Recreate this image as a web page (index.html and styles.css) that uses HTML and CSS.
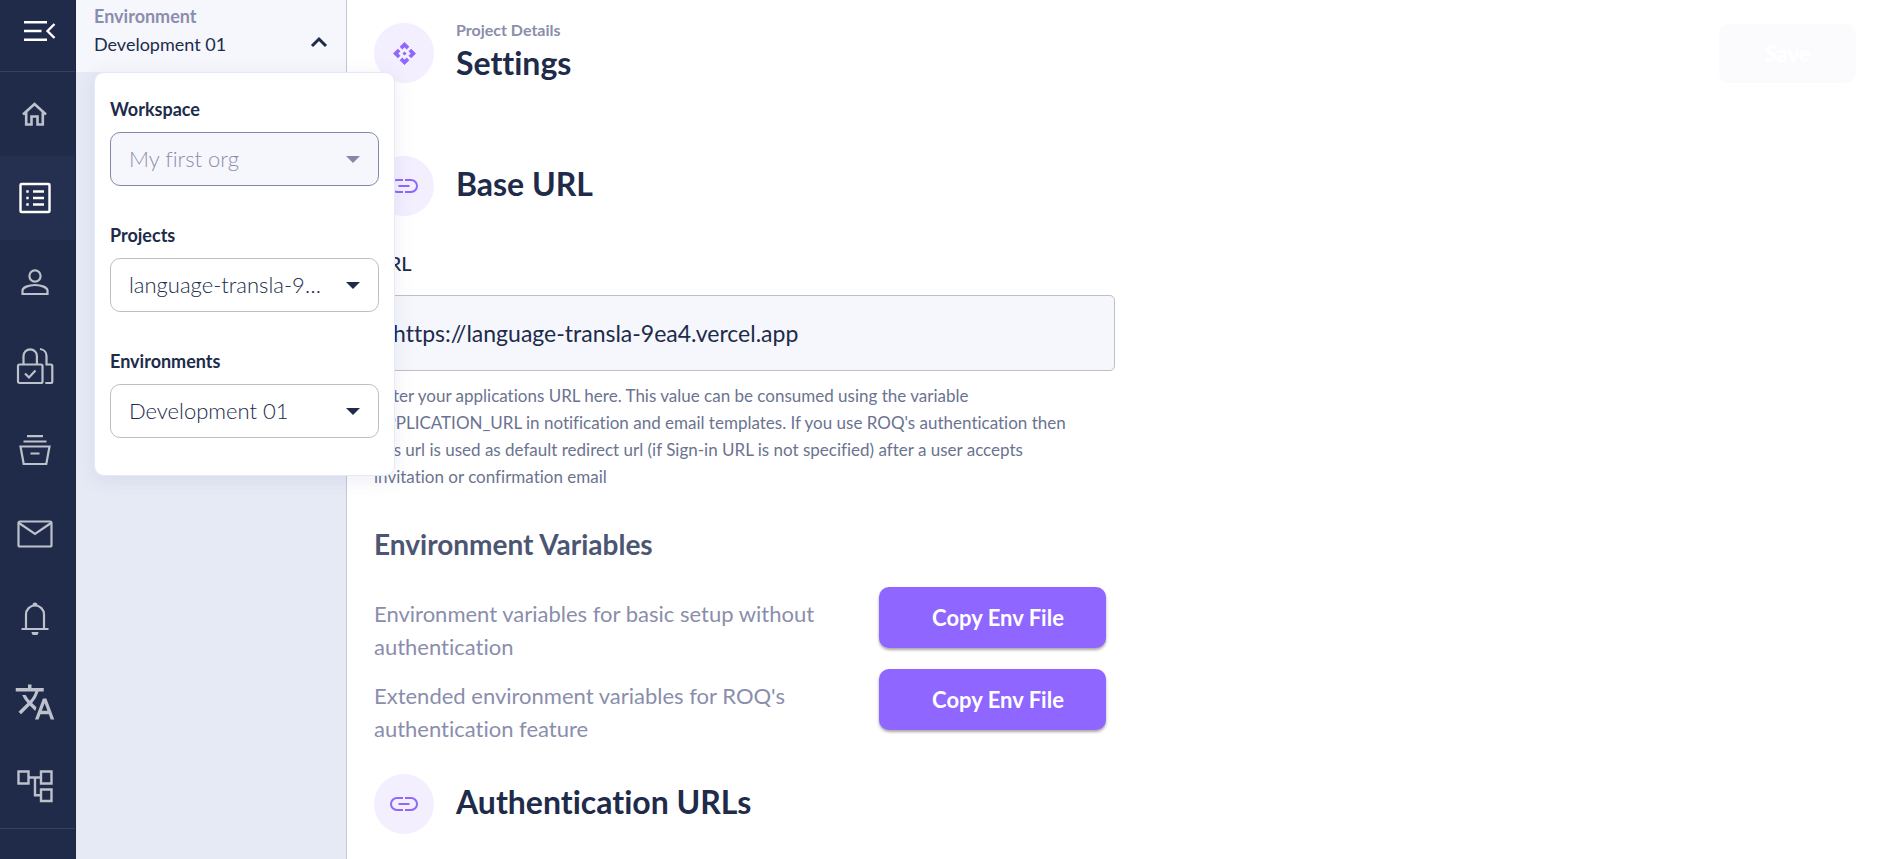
FILE: index.html
```html
<!DOCTYPE html>
<html lang="en">
<head>
<meta charset="utf-8">
<title>Project Settings</title>
<link rel="stylesheet" href="styles.css">
</head>
<body>
<div class="app">
  <nav class="rail" aria-label="Main">
    <button class="rail-toggle" aria-label="Collapse menu">
      <svg width="32" height="22" viewBox="0 0 32 22" fill="none" stroke="currentColor" stroke-width="2.4"><path d="M0 2.2h23M0 11h17.500M0 19.800h23M30.500 4L23.500 11l7 7"/></svg>
    </button>
    <a class="rail-item" href="#" aria-label="Home"><svg width="27" height="24" viewBox="0 0 27 24" fill="none" stroke="currentColor" stroke-width="2.600"><path d="M2 12.500L13.500 2 25 12.500M5.200 10v12.500h5.300v-8h6v8h5.300V10"/></svg></a>
    <a class="rail-item is-active" href="#" aria-label="Project"><svg width="32" height="32" viewBox="0 0 32 32" fill="none" stroke="currentColor" stroke-width="2.400"><rect x="1.500" y="2" width="29" height="28" rx="1"/><path d="M14 9.500h11M14 16h11M14 22.500h11M7.300 9.500h2.400M7.300 16h2.400M7.300 22.500h2.400"/></svg></a>
    <a class="rail-item" href="#" aria-label="Users"><svg width="28" height="28" viewBox="0 0 28 28" fill="none" stroke="currentColor" stroke-width="2.200"><circle cx="14" cy="8" r="5.600"/><path d="M1.500 26v-3.500c0-3 6-5.500 12.500-5.500s12.500 2.500 12.500 5.500V26z"/></svg></a>
    <a class="rail-item" href="#" aria-label="Access"><svg width="38" height="38" viewBox="0 0 38 38" fill="none" stroke="currentColor" stroke-width="2.200"><rect x="2" y="17.500" width="24.500" height="18.500" rx="1.500"/><path d="M7.500 17.500V9a6.700 6.700 0 0 1 13.400 0v8.500M9 26.500l4 4 6.500-7M24 2c4.200.5 6.500 3.500 6.500 7v8.500h4.300c1 0 1.500.5 1.500 1.500v15.500c0 1-.5 1.500-1.500 1.500h-5.500"/></svg></a>
    <a class="rail-item" href="#" aria-label="Files"><svg width="32" height="32" viewBox="0 0 32 32" fill="none" stroke="currentColor" stroke-width="2.200"><path d="M8 2.200h16M4.500 7.500h23M1.500 12.500h29L27.300 30H4.700zM11.500 19.500h9"/></svg></a>
    <a class="rail-item" href="#" aria-label="Mail"><svg width="36" height="28" viewBox="0 0 36 28" fill="none" stroke="currentColor" stroke-width="2.200"><rect x="1.500" y="1.500" width="33" height="25" rx="1.500"/><path d="M2 3l16 11L34 3"/></svg></a>
    <a class="rail-item" href="#" aria-label="Notifications"><svg width="28" height="34" viewBox="0 0 28 34" fill="none" stroke="currentColor" stroke-width="2.200"><path d="M0.500 28h27M5 28V13.500a9 9 0 0 1 18 0V28"/><path d="M11.500 4a2.500 2.500 0 0 1 5 0zM10.500 31h7a3.500 3.500 0 0 1-7 0z" fill="currentColor" stroke="none"/></svg></a>
    <a class="rail-item" href="#" aria-label="Translations"><svg width="42" height="42" viewBox="0 0 24 24" fill="currentColor"><path d="M12.870 15.070l-2.540-2.510.03-.03A17.520 17.520 0 0 0 14.070 6H17V4h-7V2H8v2H1v1.990h11.170C11.500 7.920 10.440 9.750 9 11.350 8.070 10.320 7.300 9.190 6.690 8h-2c.73 1.630 1.730 3.170 2.980 4.560l-5.090 5.020L4 19l5-5 3.110 3.110.76-2.040zM18.500 10h-2L12 22h2l1.120-3h4.750L21 22h2l-4.500-12zm-2.620 7l1.620-4.330L19.120 17h-3.240z"/></svg></a>
    <a class="rail-item" href="#" aria-label="Workflows"><svg width="36" height="34" viewBox="0 0 36 34" fill="none" stroke="currentColor" stroke-width="2.400"><path d="M1.500 2.500h10v12h-10zM24 2.500h10.500v12H24zM24 20.500h10.500v11.500H24zM11.500 8.500H24M18 8.500v17.800h6"/></svg></a>
    <div class="rail-foot"></div>
  </nav>

  <aside class="side">
    <button class="env-switch" aria-expanded="true">
      <span class="env-text"><span class="env-kind">Environment</span><span class="env-name">Development 01</span></span>
      <svg width="18" height="12" viewBox="0 0 18 12" fill="none" stroke="currentColor" stroke-width="3"><path d="M2 10l7-7 7 7"/></svg>
    </button>
    <div class="env-menu">
      <div class="pick">
        <label for="ws">Workspace</label>
        <div class="select"><select id="ws" disabled><option>My first org</option></select><svg width="14" height="7" viewBox="0 0 14 7" fill="currentColor"><path d="M0 0h14L7 7z"/></svg></div>
      </div>
      <div class="pick">
        <label for="pr">Projects</label>
        <div class="select"><select id="pr"><option>language-transla-9ea4</option></select><svg width="14" height="7" viewBox="0 0 14 7" fill="currentColor"><path d="M0 0h14L7 7z"/></svg></div>
      </div>
      <div class="pick">
        <label for="en">Environments</label>
        <div class="select"><select id="en"><option>Development 01</option></select><svg width="14" height="7" viewBox="0 0 14 7" fill="currentColor"><path d="M0 0h14L7 7z"/></svg></div>
      </div>
    </div>
  </aside>

  <main class="main">
    <header class="page-head">
      <span class="badge"><svg width="25" height="25" viewBox="0 0 24 24" fill="currentColor"><path d="M14 12l-2 2-2-2 2-2 2 2zm-2-6l2.120 2.120 2.500-2.500L12 1 7.380 5.620l2.500 2.500L12 6zm-6 6l2.120-2.120-2.500-2.500L1 12l4.620 4.620 2.500-2.500L6 12zm12 0l-2.120 2.120 2.500 2.500L23 12l-4.620-4.620-2.500 2.500L18 12zm-6 6l-2.120-2.120-2.500 2.500L12 23l4.620-4.620-2.500-2.500L12 18z"/></svg></span>
      <div class="titles">
        <p class="kicker">Project Details</p>
        <h1 class="title">Settings</h1>
      </div>
      <button class="save" disabled>Save</button>
    </header>

    <section class="block">
      <div class="section-head">
        <span class="badge"><svg width="28" height="14" viewBox="0 0 28 14" fill="none" stroke="currentColor" stroke-width="2"><path d="M13 1H7a6 6 0 0 0 0 12h6M15 1h6a6 6 0 0 1 0 12h-6M8.500 7h11"/></svg></span>
        <h2 class="title">Base URL</h2>
      </div>
      <label class="field-label" for="url">URL</label>
      <input class="field" id="url" type="text" value="https://language-transla-9ea4.vercel.app">
      <p class="help">Enter your applications URL here. This value can be consumed using the variable APPLICATION_URL in notification and email templates. If you use ROQ's authentication then this url is used as default redirect url (if Sign-in URL is not specified) after a user accepts invitation or confirmation email</p>
      <h3 class="subhead">Environment Variables</h3>
      <div class="env-files">
        <p class="env-desc">Environment variables for basic setup without authentication</p>
        <button class="copy">Copy Env File</button>
        <p class="env-desc">Extended environment variables for ROQ's authentication feature</p>
        <button class="copy">Copy Env File</button>
      </div>
    </section>

    <section>
      <div class="section-head">
        <span class="badge"><svg width="28" height="14" viewBox="0 0 28 14" fill="none" stroke="currentColor" stroke-width="2"><path d="M13 1H7a6 6 0 0 0 0 12h6M15 1h6a6 6 0 0 1 0 12h-6M8.500 7h11"/></svg></span>
        <h2 class="title">Authentication URLs</h2>
      </div>
    </section>
  </main>
</div>
</body>
</html>
```
FILE: styles.css
```css
* { box-sizing: border-box; }
body { margin: 0; background: #fff; color: #202b4a; font-family: Lato, "Open Sans", sans-serif; font-variant-ligatures: none; }
h1, h2, h3, p { margin: 0; }
button, input, select { font: inherit; color: inherit; font-variant-ligatures: none; }
button { border: 0; padding: 0; cursor: pointer; }
svg { display: block; flex: none; }

.app { display: flex; min-height: 100vh; }

.rail { flex: none; width: 76px; display: flex; flex-direction: column; background: #202b49; color: #bcc1cc; border-right: 1px solid #1c2643; }
.rail-toggle { height: 72px; padding: 0 0 10px 24px; background: none; color: #fff; border-bottom: 1px solid #36415f; }
.rail-item { height: 84px; padding-right: 6px; display: flex; align-items: center; justify-content: center; color: inherit; }
.rail-item.is-active { background: #252f4f; color: #fff; }
.rail-foot { flex: 1; min-height: 31px; border-top: 1px solid #36415f; }

.side { flex: none; width: 271px; position: relative; background: #e5eaf5; border-right: 1px solid #c5c7d6; }
.env-switch { width: 100%; height: 72px; padding: 2px 18px 14px; display: flex; align-items: flex-end; justify-content: space-between; background: #f6f7fc; text-align: left; }
.env-switch svg { margin-bottom: 10px; }
.env-text { display: flex; flex-direction: column; line-height: 28px; }
.env-kind { font-size: 18px; font-weight: 700; color: #8a8eac; }
.env-name { font-size: 18px; }

.env-menu { position: absolute; z-index: 2; top: 72px; left: 18px; width: 301px; padding: 20px 15px 37px; display: grid; gap: 33px; background: #fff; border: 1px solid #e6e9f6; border-radius: 10px; box-shadow: 0 4px 20px rgba(90, 90, 170, .1); }
.pick { display: grid; gap: 7px; }
.pick label { font-size: 18px; line-height: 32px; font-weight: 700; }
.select { display: grid; align-items: center; min-width: 0; }
.select > * { grid-area: 1 / 1; }
.select svg { justify-self: end; margin-right: 19px; pointer-events: none; }
.select select { width: 100%; height: 54px; padding: 0 52px 2px 18px; appearance: none; background: #fff; border: 1px solid #bfbfc2; border-radius: 10px; font-size: 22px; font-weight: 300; text-overflow: ellipsis; }
.select select:disabled { background: #f6f7fc; border-color: #8489a8; color: #8a8eac; opacity: 1; }
.select select:disabled + svg { color: #8489a8; }

.main { flex: 1; min-width: 0; padding: 18px 21px 26px 27px; }
.badge { flex: none; width: 60px; height: 60px; display: grid; place-items: center; border-radius: 50%; background: #f3efff; color: #8f66ff; }
.page-head { display: flex; align-items: flex-end; gap: 22px; }
.titles { flex: 1; display: grid; gap: 1px; }
.kicker { font-size: 16px; line-height: 24px; font-weight: 700; color: #8a8eac; }
.title { font-size: 32px; line-height: 40px; font-weight: 700; }
.save { width: 137px; height: 59px; border-radius: 10px; background: #fbfbfe; color: #fff; font-size: 22px; font-weight: 900; }

.block { margin: 73px 0 29px; }
.section-head { display: flex; align-items: center; gap: 22px; }
.section-head .title { padding-bottom: 4px; }
.field-label { display: block; margin: 31px 0 16px; font-size: 20px; line-height: 32px; font-weight: 500; }
.field { display: block; width: 100%; max-width: 741px; height: 76px; padding: 0 18px; background: #f6f7fc; border: 1px solid #bfbfc4; border-radius: 5px; font-size: 23px; }
.help { max-width: 720px; margin-top: 11px; font-size: 17px; line-height: 27px; color: #6b7390; }
.subhead { margin: 34px 0 23px; font-size: 28px; line-height: 40px; font-weight: 700; color: #4c5672; }
.env-files { max-width: 732px; display: grid; grid-template-columns: 1fr 227px; gap: 6px 24px; align-items: start; }
.env-desc { padding-top: 10px; font-size: 22px; line-height: 33px; color: #8a8eac; }
.copy { height: 61px; padding-left: 11px; border-radius: 10px; background: #8f66ff; color: #fff; font-size: 22px; font-weight: 700; box-shadow: 0 2px 3px rgba(0, 0, 0, .35); }
```
